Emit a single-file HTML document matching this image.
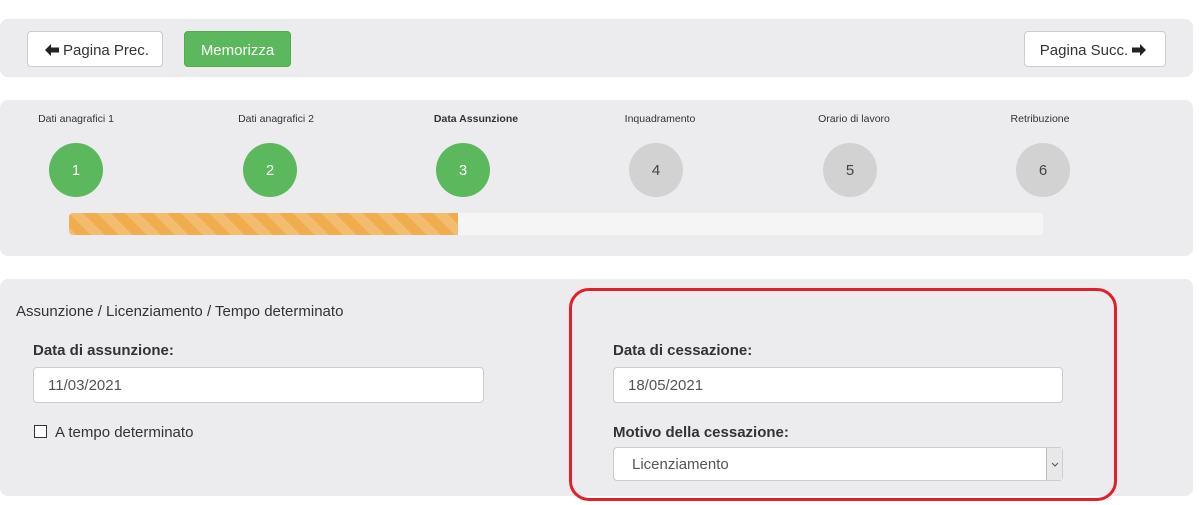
<!DOCTYPE html>
<html><head><style>
*{box-sizing:border-box;margin:0;padding:0}
body{width:1199px;height:505px;background:#fff;font-family:"Liberation Sans",sans-serif;color:#333;position:relative;overflow:hidden}
.p{position:absolute;left:0;width:1193px;background:#ececee;border-radius:8px}
.a{position:absolute}
.btn{position:absolute;height:36px;border:1px solid #ccc;border-radius:4px;background:#fff;font-size:15px;display:flex;align-items:center;justify-content:center;color:#333;padding-top:2px}
.btn svg{margin:0 4px}
.lbl{position:absolute;font-size:10.5px;width:160px;text-align:center;color:#333}
.c{position:absolute;top:143px;width:54px;height:54px;border-radius:50%;color:#fff;font-size:15px;display:flex;align-items:center;justify-content:center}
.g{background:#5cb85c}.n{background:#d2d2d2;color:#444}
.inp{position:absolute;height:36px;background:#fff;border:1px solid #ccc;border-radius:4px;font-size:15px;padding-left:14px;display:flex;align-items:center;color:#555}
.b{position:absolute;font-size:15px;font-weight:bold;color:#333}
</style></head><body>
<div class="p" style="top:19px;height:58px"></div>
<div class="btn" style="left:27px;top:31px;width:136px"><svg width="14" height="12" viewBox="0 0 14 12"><path d="M0 6L6 0V3.5H14V8.5H6V12Z" fill="#222"/></svg>Pagina Prec.</div>
<div class="btn" style="left:184px;top:31px;width:107px;background:#5cb85c;border-color:#4cae4c;color:#fff">Memorizza</div>
<div class="btn" style="left:1024px;top:31px;width:142px">Pagina Succ.<svg width="14" height="12" viewBox="0 0 14 12"><path d="M14 6L8 0V3.5H0V8.5H8V12Z" fill="#222"/></svg></div>

<div class="p" style="top:100px;height:156px"></div>
<div class="lbl" style="left:-4px;top:113px">Dati anagrafici 1</div>
<div class="lbl" style="left:196px;top:113px">Dati anagrafici 2</div>
<div class="lbl" style="left:396px;top:113px;font-weight:bold">Data Assunzione</div>
<div class="lbl" style="left:580px;top:113px">Inquadramento</div>
<div class="lbl" style="left:774px;top:113px">Orario di lavoro</div>
<div class="lbl" style="left:960px;top:113px">Retribuzione</div>
<div class="c g" style="left:49px">1</div>
<div class="c g" style="left:243px">2</div>
<div class="c g" style="left:436px">3</div>
<div class="c n" style="left:629px">4</div>
<div class="c n" style="left:823px">5</div>
<div class="c n" style="left:1016px">6</div>
<div class="a" style="left:69px;top:213px;width:974px;height:22px;background:#f5f5f5;border-radius:4px;overflow:hidden">
<div style="width:389px;height:22px;background:#f0ad4e;background-image:linear-gradient(45deg,rgba(255,255,255,.18) 25%,transparent 25%,transparent 50%,rgba(255,255,255,.18) 50%,rgba(255,255,255,.18) 75%,transparent 75%,transparent);background-size:28px 28px"></div></div>

<div class="p" style="top:279px;height:217px"></div>
<div class="a" style="left:16px;top:303px;font-size:15px">Assunzione / Licenziamento / Tempo determinato</div>
<div class="b" style="left:33px;top:342px">Data di assunzione:</div>
<div class="inp" style="left:33px;top:367px;width:451px">11/03/2021</div>
<div class="a" style="left:34px;top:425px;width:13px;height:13px;border:1px solid #333;background:#fff"></div>
<div class="a" style="left:55px;top:424px;font-size:15px">A tempo determinato</div>
<div class="b" style="left:613px;top:342px">Data di cessazione:</div>
<div class="inp" style="left:613px;top:367px;width:450px">18/05/2021</div>
<div class="b" style="left:613px;top:424px">Motivo della cessazione:</div>
<div class="inp" style="left:613px;top:447px;width:450px;height:34px;padding-left:18px">Licenziamento
<div class="a" style="right:0;top:0;width:16px;height:32px;background:#e8e8e8;border-left:1px solid #bbb;display:flex;align-items:center;justify-content:center"><svg width="8" height="5" viewBox="0 0 8 5"><path d="M1 1L4 4L7 1" stroke="#555" fill="none"/></svg></div></div>
<div class="a" style="left:569px;top:288px;width:548px;height:213px;border:3px solid #e0202a;border-radius:20px"></div>
</body></html>
